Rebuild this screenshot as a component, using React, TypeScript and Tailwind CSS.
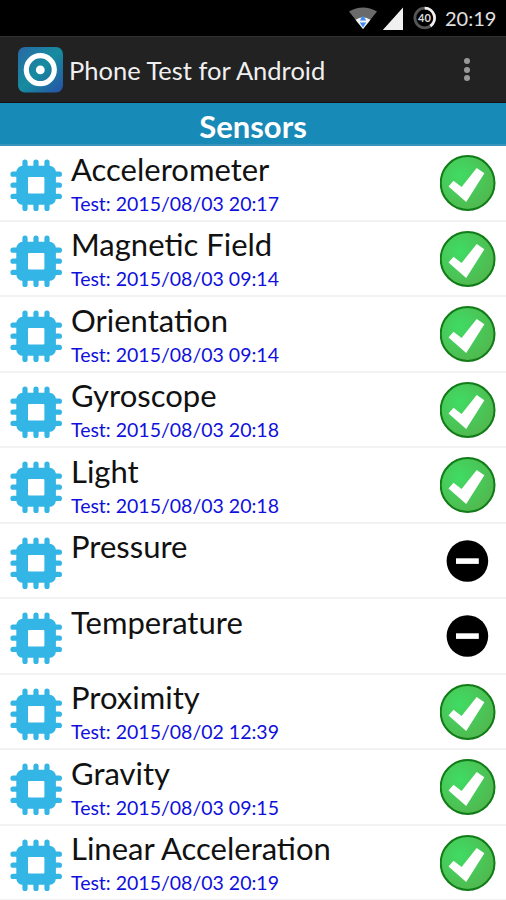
interface Sensor {
  name: string;
  tested?: string;
}

const sensors: Sensor[] = [
  { name: 'Accelerometer', tested: '2015/08/03 20:17' },
  { name: 'Magnetic Field', tested: '2015/08/03 09:14' },
  { name: 'Orientation', tested: '2015/08/03 09:14' },
  { name: 'Gyroscope', tested: '2015/08/03 20:18' },
  { name: 'Light', tested: '2015/08/03 20:18' },
  { name: 'Pressure' },
  { name: 'Temperature' },
  { name: 'Proximity', tested: '2015/08/02 12:39' },
  { name: 'Gravity', tested: '2015/08/03 09:15' },
  { name: 'Linear Acceleration', tested: '2015/08/03 20:19' },
];

function ChipIcon() {
  return (
    <svg viewBox="0 0 52 52" className="h-[52px] w-[52px] shrink-0">
      <path
        d="M15 3v46.4M26 3v46.4M37 3v46.4M3 15.2h46.4M3 26.2h46.4M3 37.4h46.4"
        stroke="#33b5e5"
        strokeWidth="5.2"
        strokeLinecap="round"
      />
      <rect x="6.3" y="6.8" width="39.6" height="39" rx="6.5" fill="#33b5e5" />
      <rect x="18" y="18" width="16.4" height="16.6" rx="1" fill="#fff" />
    </svg>
  );
}

function PassedIcon() {
  return (
    <svg viewBox="0 0 56 56" className="h-14 w-14">
      <defs>
        <radialGradient id="passed" cx="0.36" cy="0.36" r="0.65">
          <stop offset="0" stopColor="#3fdc64" />
          <stop offset="1" stopColor="#50ba50" />
        </radialGradient>
      </defs>
      <circle cx="27.6" cy="28" r="26.9" fill="url(#passed)" stroke="#117c17" strokeWidth="2" />
      <path d="M8.5 31.5l5-5.8 8.1 6.2 15.1-18.8 7.7 5.1-18.2 28.9z" fill="#fff" />
    </svg>
  );
}

function SkippedIcon() {
  return (
    <svg viewBox="0 0 56 56" className="h-14 w-14">
      <circle cx="27.4" cy="28" r="20.8" fill="#000" />
      <rect x="16" y="25.3" width="22.8" height="5.6" fill="#fff" />
    </svg>
  );
}

function StatusBar() {
  return (
    <div className="flex h-9 items-center bg-black pl-[348px] text-[#e0e0e0]">
      <svg viewBox="0 0 30 24" className="h-6 w-[30px]">
        <path d="M1 5.5Q15-2.5 29 5.5L15 23z" fill="#6a6a6a" />
        <path d="M7.5 13.8q7.5-5 15 0L15 23z" fill="#f2f2f2" />
        <path d="M15 9.5l3.2 4.9h-6.4zM15 21.5l-3.2-4.9h6.4z" fill="#3c8cf0" />
      </svg>
      <svg viewBox="0 0 22 24" className="ml-1 h-6 w-[22px]">
        <path d="M21 1.5V24H.8z" fill="#f0f0f0" />
      </svg>
      <svg viewBox="0 0 24 24" className="ml-2 h-6 w-6">
        <circle cx="12.7" cy="12" r="9.8" fill="none" stroke="#555" strokeWidth="2.8" />
        <path d="M12.7 2.2a9.8 9.8 0 0 1 5.7 17.8" fill="none" stroke="#f2f2f2" strokeWidth="2.8" />
        <text x="12.5" y="15.8" textAnchor="middle" fontSize="11" fontWeight="700" fill="#ddd" className="font-['Lato',sans-serif]">
          40
        </text>
      </svg>
      <span className="ml-[9px] text-[20px] leading-none">20:19</span>
    </div>
  );
}

function ActionBar() {
  return (
    <div className="flex h-[67px] items-center border-t border-[#303030] border-b border-b-[#15100c] bg-[#222] pl-[18px] text-[#f0f0f0]">
      <svg viewBox="0 0 46 46" className="h-[46px] w-[46px]">
        <defs>
          <linearGradient id="logo" x1="0" y1="0" x2="1" y2="1">
            <stop offset="0" stopColor="#2868a6" />
            <stop offset="0.5" stopColor="#168c9f" />
            <stop offset="1" stopColor="#2750a8" />
          </linearGradient>
        </defs>
        <rect width="45" height="45.5" rx="7" fill="url(#logo)" />
        <circle cx="22.3" cy="22.7" r="14" fill="none" stroke="#fff" strokeWidth="5.2" />
        <circle cx="22.3" cy="22.9" r="4.4" fill="#fff" />
      </svg>
      <h1 className="ml-[5px] pt-0.5 text-[25.5px]">Phone Test for Android</h1>
      <div className="mr-9 ml-auto flex flex-col gap-[2.4px]">
        <span className="h-1.5 w-1.5 rounded-full bg-[#999]" />
        <span className="h-1.5 w-1.5 rounded-full bg-[#999]" />
        <span className="h-1.5 w-1.5 rounded-full bg-[#999]" />
      </div>
    </div>
  );
}

function SensorRow({ name, tested }: Sensor) {
  return (
    <li className="flex h-[75.5px] border-b-2 border-[#f2f2f2] pt-[9px] pr-[10px] pl-[10px]">
      <div className="pt-1">
        <ChipIcon />
      </div>
      <div className="-mt-[9px] ml-[9px] flex-1 whitespace-nowrap">
        <div className="pt-[4.5px] text-[31px] leading-9 text-[#111]">{name}</div>
        {tested && <div className="pt-[5px] text-[19.5px] leading-6 text-[#1010dc]">Test: {tested}</div>}
      </div>
      {tested ? <PassedIcon /> : <SkippedIcon />}
    </li>
  );
}

export default function App() {
  return (
    <div className="h-[900px] w-[506px] overflow-hidden bg-white font-['Lato',sans-serif]">
      <StatusBar />
      <ActionBar />
      <h2 className="flex h-[43.4px] items-center justify-center border-b-2 border-[#3a93bd] bg-[#188ab8] pt-1.5 text-[31px] font-bold text-white">
        Sensors
      </h2>
      <ul>
        {sensors.map((sensor) => (
          <SensorRow key={sensor.name} {...sensor} />
        ))}
      </ul>
    </div>
  );
}
